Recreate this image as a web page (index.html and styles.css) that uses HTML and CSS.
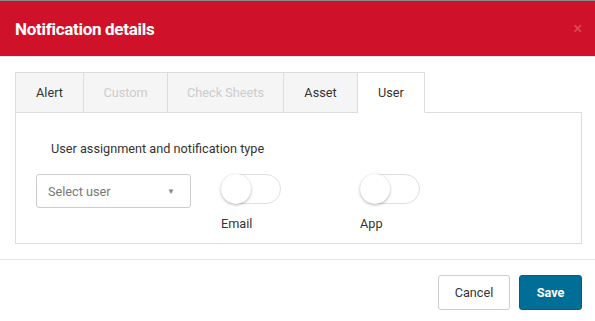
FILE: index.html
```html
<!DOCTYPE html>
<html lang="en">
<head>
    <meta charset="UTF-8">
    <meta name="viewport" content="width=device-width, initial-scale=1.0">
    <title>Notification details</title>
    <link rel="stylesheet" href="styles.css">
</head>
<body>
    <div class="modal">
        <div class="modal-header">
            <h4 class="modal-title">Notification details</h4>
            <span class="close">&times;</span>
        </div>

        <div class="modal-body">
            <ul class="nav-tabs">
                <li class="tab">Alert</li>
                <li class="tab disabled">Custom</li>
                <li class="tab disabled">Check Sheets</li>
                <li class="tab">Asset</li>
                <li class="tab active">User</li>
            </ul>

            <div class="tab-pane">
                <p class="pane-title">User assignment and notification type</p>
                <div class="row">
                    <div class="select">
                        <span>Select user</span>
                        <span class="caret">&#9660;</span>
                    </div>
                    <div class="switch-group">
                        <span class="switch"><span class="knob"></span></span>
                        <label>Email</label>
                    </div>
                    <div class="switch-group">
                        <span class="switch"><span class="knob"></span></span>
                        <label>App</label>
                    </div>
                </div>
            </div>
        </div>

        <div class="modal-footer">
            <button class="btn">Cancel</button>
            <button class="btn btn-primary">Save</button>
        </div>
    </div>
</body>
</html>
```

FILE: styles.css
```css
* {
    box-sizing: border-box;
}
body {
    margin: 0;
    font-family: Roboto, "Liberation Sans", Arial, sans-serif;
    font-size: 12.7px;
    color: #333;
    background: #fff;
}
.modal {
    border-top: 1px solid #8a8a8a;
}
.modal-header {
    background: #cf1229;
    height: 55px;
    padding: 0 15px;
    display: flex;
    align-items: center;
    justify-content: space-between;
}
.modal-title {
    margin: 0;
    color: #fff;
    font-size: 17px;
    font-weight: bold;
    letter-spacing: -0.3px;
}
.close {
    color: #fff;
    opacity: 0.25;
    font-size: 16px;
    margin-right: -2px;
}
.modal-body {
    padding: 15px 13px 15px 15px;
    border-top: 1px solid #e5e5e5;
}
.nav-tabs {
    list-style: none;
    margin: 0;
    padding: 0;
    display: flex;
    border-bottom: 1px solid #ddd;
    height: 41px;
}
.tab {
    height: 41px;
    line-height: 40px;
    text-align: center;
    background: #f5f5f5;
    border: 1px solid #ddd;
    border-left: none;
}
.tab:nth-child(1) { width: 69px; border-left: 1px solid #ddd; }
.tab:nth-child(2) { width: 84px; }
.tab:nth-child(3) { width: 116px; }
.tab:nth-child(4) { width: 74px; }
.tab:nth-child(5) { width: 67px; }
.tab.disabled {
    color: #ccc;
}
.tab.active {
    background: #fff;
    border-bottom-color: #fff;
}
.tab-pane {
    border: 1px solid #ddd;
    border-top: none;
    height: 131px;
    padding: 28px 20px 0;
}
.pane-title {
    margin: 0 0 17px 15px;
    line-height: 16px;
}
.row {
    display: flex;
}
.select {
    width: 155px;
    height: 34px;
    border: 1px solid #ccc;
    border-radius: 3px;
    padding: 0 15px 0 11px;
    display: flex;
    align-items: center;
    justify-content: space-between;
    color: #777;
    margin-right: 30px;
}
.caret {
    font-size: 8px;
    color: #888;
}
.switch-group {
    width: 139px;
    display: flex;
    flex-direction: column;
}
.switch {
    position: relative;
    width: 60px;
    height: 30px;
    border: 1px solid #dfdfdf;
    border-radius: 15px;
}
.knob {
    position: absolute;
    left: -1px;
    top: -1px;
    width: 30px;
    height: 30px;
    border-radius: 50%;
    background: #fff;
    box-shadow: 0 1px 3px rgba(0,0,0,0.3);
}
.switch-group label {
    margin-top: 12px;
}
.modal-footer {
    border-top: 1px solid #e5e5e5;
    padding: 15px 13px 0 0;
    display: flex;
    justify-content: flex-end;
    gap: 9px;
}
.btn {
    height: 35px;
    width: 72px;
    border: 1px solid #ccc;
    border-radius: 3px;
    background: #fff;
    color: #333;
    font-family: inherit;
    font-size: 12.7px;
}
.btn-primary {
    width: 63px;
    background: #006e96;
    border-color: #005f82;
    color: #fff;
    font-weight: bold;
}
```
